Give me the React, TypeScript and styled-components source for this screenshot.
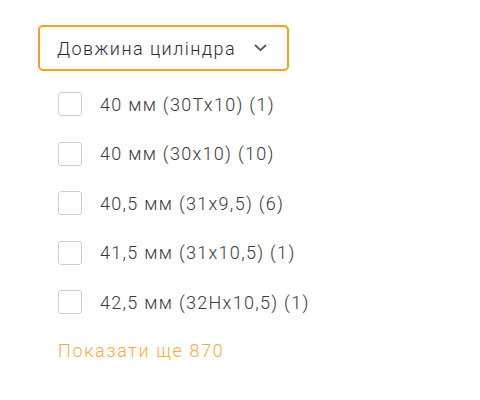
import React from "react";
import styled, { createGlobalStyle } from "styled-components";

const Global = createGlobalStyle`
  html, body { margin: 0; padding: 0; background: #fff; }
  body { font-family: Roboto, "Noto Sans", Arial, sans-serif; }
`;

const Wrap = styled.div`
  padding: 25px 0 0 38px;
  display: flex;
  flex-direction: column;
  align-items: flex-start;
`;

const Toggle = styled.button`
  box-sizing: border-box;
  width: 251px;
  height: 46px;
  border: 2px solid #f7a01c;
  border-radius: 5px;
  background: #fff;
  display: flex;
  align-items: center;
  justify-content: space-between;
  padding: 0 20px 0 17px;
  font-family: Roboto, Arial, sans-serif;
  font-size: 18px;
  font-weight: 300;
  letter-spacing: 1.45px;
  color: #2e2e2e;
  cursor: pointer;
`;

const List = styled.ul`
  list-style: none;
  margin: 0;
  padding: 21px 0 0 20px;
  display: flex;
  flex-direction: column;
  gap: 25.5px;
`;

const Item = styled.li`
  display: flex;
  align-items: center;
  height: 24px;
`;

const Box = styled.span`
  box-sizing: border-box;
  width: 24px;
  height: 24px;
  border: 1.5px solid #cfcfcf;
  border-radius: 3px;
  background: #fff;
  margin-right: 18px;
  flex-shrink: 0;
`;

const Label = styled.span`
  font-size: 18px;
  font-weight: 300;
  letter-spacing: 1.3px;
  color: #3a3a3a;
`;

const More = styled.a`
  margin: 26px 0 0 20px;
  font-size: 18px;
  font-weight: 300;
  letter-spacing: 1.65px;
  color: #f8aa35;
  cursor: pointer;
`;

const items = [
  "40 мм (30Tx10) (1)",
  "40 мм (30x10) (10)",
  "40,5 мм (31x9,5) (6)",
  "41,5 мм (31x10,5) (1)",
  "42,5 мм (32Hx10,5) (1)",
];

export default function App() {
  return (
    <>
      <Global />
      <Wrap>
        <Toggle>
          <span>Довжина циліндра</span>
          <svg width="13" height="8" viewBox="0 0 13 8" fill="none">
            <path d="M1.5 1.5 L6.5 6.2 L11.5 1.5" stroke="#555" strokeWidth="1.8" strokeLinecap="round" strokeLinejoin="round" />
          </svg>
        </Toggle>
        <List>
          {items.map((t) => (
            <Item key={t}>
              <Box />
              <Label>{t}</Label>
            </Item>
          ))}
        </List>
        <More>Показати ще 870</More>
      </Wrap>
    </>
  );
}
